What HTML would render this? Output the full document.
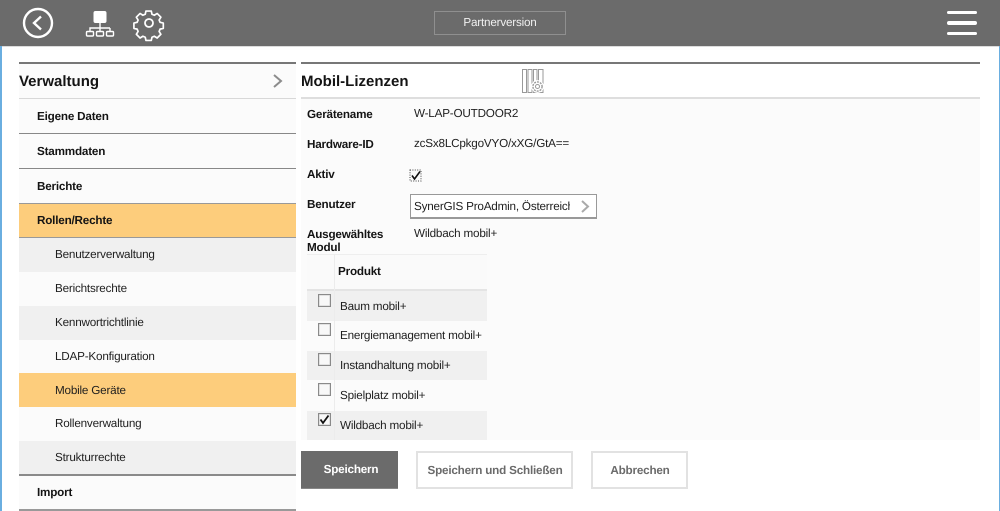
<!DOCTYPE html>
<html lang="de"><head><meta charset="utf-8"><title>Mobil-Lizenzen</title>
<style>
html,body{margin:0;padding:0;background:#fff}
#p{position:relative;width:1000px;height:511px;overflow:hidden;background:#fff;font-family:"Liberation Sans",sans-serif;color:#1e1e1e;font-size:11.7px;letter-spacing:-.2px;text-rendering:geometricPrecision}
#p div{position:absolute}
.t{white-space:nowrap;line-height:14px;margin-top:.8px}
.b{font-weight:bold;color:#141414}
.h{letter-spacing:0;margin-top:0}
.row{left:19px;width:277px}
.sub{left:55px}
.main{left:37px}
.cb{left:318px;width:11px;height:11px;border:1px solid #8a8a8a;background:#f8f8f8;box-shadow:inset 0 0 0 .5px #ccc}
.btn{box-sizing:border-box;border:2px solid #e2e2e2;background:#fff;color:#6b6b6b;font-weight:bold;text-align:center;white-space:nowrap}
</style></head><body><div id="p">
<div style="left:0;top:0;width:1000px;height:46px;background:#6b6b6b"></div>
<div style="left:0;top:46px;width:1000px;height:1px;background:#dcdcdc"></div>
<div style="left:0;top:46px;width:1.5px;height:465px;background:#6aaee0"></div>
<div style="left:999px;top:46px;width:1px;height:465px;background:#6aaee0"></div>

<svg style="position:absolute;left:0;top:0" width="180" height="46" viewBox="0 0 180 46" fill="none" stroke="#fff">
<circle cx="38" cy="23" r="14" stroke-width="2.4"/>
<path d="M41 16.5 L34 23 L41 29.5" stroke-width="2.4"/>
<rect x="94" y="11.5" width="12" height="11" rx="1.5" fill="#fff" stroke="#fff" stroke-width="1"/>
<path d="M100 22V28M90 32V28H110M110 28V32M100 28V32" stroke-width="1.4"/>
<rect x="86.5" y="31.5" width="7" height="4.5" rx="1" stroke-width="1.4"/>
<rect x="96.5" y="31.5" width="7" height="4.5" rx="1" stroke-width="1.4"/>
<rect x="106.5" y="31.5" width="7" height="4.5" rx="1" stroke-width="1.4"/>
<circle cx="149" cy="23" r="4" stroke-width="1.8"/>
<path d="M146 9.5h6l.8 3.6 2.6 1.1 3.2-2 4.2 4.2-2 3.2 1.1 2.6 3.6.8v6l-3.6.8-1.1 2.6 2 3.2-4.2 4.2-3.2-2-2.6 1.1-.8 3.6h-6l-.8-3.6-2.6-1.1-3.2 2-4.2-4.2 2-3.2-1.1-2.6-3.6-.8v-6l3.6-.8 1.1-2.6-2-3.2 4.2-4.2 3.2 2 2.6-1.1z" transform="translate(16 2.6) scale(.89)" stroke-width="1.9" stroke-linejoin="round"/>
</svg>

<div style="left:434px;top:11px;width:132px;height:24px;box-sizing:border-box;border:1px solid #8f8f8f;color:#f0f0f0;text-align:center;line-height:22.5px">Partnerversion</div>
<div style="left:947px;top:10.5px;width:30px;height:3.5px;background:#fff;border-radius:2px"></div>
<div style="left:947px;top:21px;width:30px;height:3.5px;background:#fff;border-radius:2px"></div>
<div style="left:947px;top:31.5px;width:30px;height:3.5px;background:#fff;border-radius:2px"></div>

<!-- sidebar -->
<div class="row" style="top:62px;height:2px;background:#777"></div>
<div class="row" style="top:64px;height:34px;background:#fbfbfb"></div>
<div class="row" style="top:98px;height:1px;background:#d8d8d8"></div>
<div class="t b h" style="left:19px;top:72.6px;font-size:15px;line-height:18px">Verwaltung</div>
<svg style="position:absolute;left:271px;top:73px" width="14" height="16" fill="none" stroke="#8c8c8c" stroke-width="2"><path d="M3 2L10 8L3 14"/></svg>

<div class="row" style="top:99px;height:34px;background:#fbfbfb"></div>
<div class="row" style="top:133px;height:1px;background:#888"></div>
<div class="row" style="top:134px;height:34px;background:#fbfbfb"></div>
<div class="row" style="top:168px;height:1px;background:#888"></div>
<div class="row" style="top:169px;height:34px;background:#fbfbfb"></div>
<div class="row" style="top:203px;height:34px;background:#fdcd7c;border-top:1px solid #999"></div>
<div class="row" style="top:237px;height:1.5px;background:#999"></div>
<div class="row" style="top:238px;height:34px;background:#f0f0f0"></div>
<div class="row" style="top:272px;height:34px;background:#fbfbfb"></div>
<div class="row" style="top:306px;height:34px;background:#f0f0f0"></div>
<div class="row" style="top:340px;height:33px;background:#fbfbfb"></div>
<div class="row" style="top:373px;height:34px;background:#fdcd7c"></div>
<div class="row" style="top:407px;height:34px;background:#fbfbfb"></div>
<div class="row" style="top:441px;height:33px;background:#f0f0f0"></div>
<div class="row" style="top:474px;height:2px;background:#8a8a8a"></div>
<div class="row" style="top:476px;height:33px;background:#fbfbfb"></div>
<div class="row" style="top:509px;height:2px;background:#999"></div>

<div class="t b main" style="top:109px">Eigene Daten</div>
<div class="t b main" style="top:144px">Stammdaten</div>
<div class="t b main" style="top:179px">Berichte</div>
<div class="t b main" style="top:213px">Rollen/Rechte</div>
<div class="t sub" style="top:247px">Benutzerverwaltung</div>
<div class="t sub" style="top:281px">Berichtsrechte</div>
<div class="t sub" style="top:315px">Kennwortrichtlinie</div>
<div class="t sub" style="top:349px">LDAP-Konfiguration</div>
<div class="t sub" style="top:383px">Mobile Geräte</div>
<div class="t sub" style="top:416.5px">Rollenverwaltung</div>
<div class="t sub" style="top:450px">Strukturrechte</div>
<div class="t b main" style="top:485px">Import</div>

<!-- main -->
<div style="left:301px;top:62px;width:679px;height:2px;background:#777"></div>
<div style="left:301px;top:97px;width:679px;height:2px;background:#dedede"></div>
<div style="left:301px;top:99px;width:679px;height:341px;background:#fbfbfb"></div>
<div class="t b h" style="left:301px;top:72.6px;font-size:15px;line-height:18px">Mobil-Lizenzen</div>
<svg style="position:absolute;left:520px;top:68px" width="26" height="27" fill="none" stroke="#999" stroke-width="1">
<path d="M2.5 1.5h4v23h-4zM8 1.5h4v23H8zM13.5 1.5h3.5v23h-3.5zM18.5 1.5h4.5v23h-4.5z"/>
<circle cx="17.5" cy="18.5" r="6.4" fill="#fff" stroke="none"/>
<circle cx="17.5" cy="18.5" r="2"/><circle cx="17.5" cy="18.5" r="4.6" stroke-width="1.4" stroke-dasharray="2 1"/>
</svg>

<div class="t b" style="left:307px;top:107.5px">Gerätename</div>
<div class="t" style="left:414px;top:106px">W-LAP-OUTDOOR2</div>
<div class="t b" style="left:307px;top:137px">Hardware-ID</div>
<div class="t" style="left:414px;top:136px">zcSx8LCpkgoVYO/xXG/GtA==</div>
<div class="t b" style="left:307px;top:167px">Aktiv</div>
<svg style="position:absolute;left:409px;top:168px" width="14" height="15" fill="none">
<rect x="1" y="2" width="11" height="11" stroke="#444" stroke-width="1" stroke-dasharray="1 1.4"/>
<path d="M3 7.5L5.5 11L11 3.5" stroke="#111" stroke-width="1.6"/></svg>
<div class="t b" style="left:307px;top:197px">Benutzer</div>
<div style="left:410px;top:194px;width:187px;height:25px;box-sizing:border-box;border:1px solid #999;background:#fff;border-bottom-width:2px"></div>
<div class="t" style="left:414px;top:199px;width:156px;overflow:hidden">SynerGIS ProAdmin, Österreich</div>
<svg style="position:absolute;left:579px;top:199px" width="12" height="15" fill="none" stroke="#aaa" stroke-width="2"><path d="M3 2L9 7.5L3 13"/></svg>
<div class="t b" style="left:307px;top:228px;line-height:13px;margin-top:0">Ausgewähltes<br>Modul</div>
<div class="t" style="left:414px;top:226px">Wildbach mobil+</div>

<!-- table -->
<div style="left:307px;top:254px;width:180px;height:1px;background:#eee"></div>
<div style="left:307px;top:255px;width:180px;height:34px;background:#fafafa"></div>
<div style="left:307px;top:289px;width:180px;height:2px;background:#e4e4e4"></div>
<div style="left:307px;top:291px;width:180px;height:30px;background:#f0f0f0"></div>
<div style="left:307px;top:321px;width:180px;height:30px;background:#fbfbfb"></div>
<div style="left:307px;top:351px;width:180px;height:29px;background:#f0f0f0"></div>
<div style="left:307px;top:380px;width:180px;height:31px;background:#fbfbfb"></div>
<div style="left:307px;top:411px;width:180px;height:29px;background:#f0f0f0"></div>
<div style="left:334px;top:254px;width:1px;height:186px;background:#ececec"></div>
<div class="t b" style="left:338px;top:264.5px">Produkt</div>
<div class="cb" style="top:294px"></div><div class="t" style="left:340px;top:299px">Baum mobil+</div>
<div class="cb" style="top:323px"></div><div class="t" style="left:340px;top:328px">Energiemanagement mobil+</div>
<div class="cb" style="top:353px"></div><div class="t" style="left:340px;top:358px">Instandhaltung mobil+</div>
<div class="cb" style="top:383px"></div><div class="t" style="left:340px;top:388px">Spielplatz mobil+</div>
<div class="cb" style="top:413px"></div><div class="t" style="left:340px;top:418px">Wildbach mobil+</div>
<svg style="position:absolute;left:318px;top:413px" width="13" height="13" fill="none"><path d="M2.5 6.5L5 10L10.5 2.5" stroke="#111" stroke-width="1.8"/></svg>

<div class="btn" style="left:302px;top:451px;width:97px;height:38px;border:0;background:none;color:#fff;line-height:38px;z-index:2;padding-left:1px">Speichern</div>
<div style="left:301px;top:451px;width:97px;height:38px;box-sizing:border-box;border-bottom:1px solid #888;background:#6b6b6b"></div>
<div class="btn" style="left:416px;top:451px;width:157px;height:38px;line-height:35.5px;padding-left:1px">Speichern und Schließen</div>
<div class="btn" style="left:591px;top:451px;width:97px;height:38px;line-height:35.5px;padding-left:1px">Abbrechen</div>
</div></body></html>
